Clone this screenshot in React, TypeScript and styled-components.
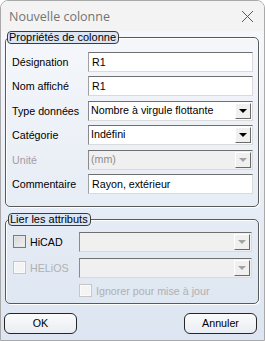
import styled, { createGlobalStyle } from "styled-components";

const GlobalStyle = createGlobalStyle`
  html, body {
    margin: 0;
    padding: 0;
    background: #ffffff;
  }
  * {
    box-sizing: border-box;
  }
`;

export default function App() {
  return (
    <>
      <GlobalStyle />
      <Window>
        <TitleBar>
          <Title>Nouvelle colonne</Title>
          <CloseIcon width="13" height="13" viewBox="0 0 13 13">
            <path d="M1 1 L12 12 M12 1 L1 12" stroke="#5a5a5a" strokeWidth="1" fill="none" />
          </CloseIcon>
        </TitleBar>

        <Body>
          <Group>
            <Legend>Propriétés de colonne</Legend>
            <FormGrid>
              <Label>Désignation</Label>
              <TextBox>R1</TextBox>

              <Label>Nom affiché</Label>
              <TextBox>R1</TextBox>

              <Label>Type données</Label>
              <Combo>
                <ComboText>Nombre à virgule flottante</ComboText>
                <ComboButton><Arrow /></ComboButton>
              </Combo>

              <Label>Catégorie</Label>
              <Combo>
                <ComboText>Indéfini</ComboText>
                <ComboButton><Arrow /></ComboButton>
              </Combo>

              <Label $disabled>Unité</Label>
              <Combo $disabled>
                <ComboText $disabled>(mm)</ComboText>
                <ComboButton><Arrow $disabled /></ComboButton>
              </Combo>

              <Label>Commentaire</Label>
              <TextBox>Rayon, extérieur</TextBox>
            </FormGrid>
          </Group>

          <Group $second>
            <Legend>Lier les attributs</Legend>
            <LinkGrid>
              <CheckLabel>
                <CheckBox />
                HiCAD
              </CheckLabel>
              <Combo $disabled>
                <ComboText $disabled />
                <ComboButton><Arrow $disabled /></ComboButton>
              </Combo>

              <CheckLabel $disabled>
                <CheckBox $disabled />
                HELiOS
              </CheckLabel>
              <Combo $disabled>
                <ComboText $disabled />
                <ComboButton><Arrow $disabled /></ComboButton>
              </Combo>

              <span />
              <CheckLabel $disabled>
                <CheckBox $disabled />
                Ignorer pour mise à jour
              </CheckLabel>
            </LinkGrid>
          </Group>

          <ButtonRow>
            <Button>OK</Button>
            <Button>Annuler</Button>
          </ButtonRow>
        </Body>
      </Window>
    </>
  );
}

const Window = styled.div`
  width: 265px;
  height: 341px;
  border: 1px solid #a9a9a9;
  border-radius: 8px 8px 0 0;
  overflow: hidden;
  display: flex;
  flex-direction: column;
  font-family: "Liberation Sans", Arial, sans-serif;
  font-size: 10.7px;
  color: #000;
`;

const TitleBar = styled.div`
  height: 30px;
  flex: 0 0 30px;
  background: #f3f3f3;
  display: flex;
  align-items: center;
  justify-content: space-between;
  padding: 0 10px 0 8px;
`;

const Title = styled.span`
  font-family: "Open Sans", "Liberation Sans", sans-serif;
  font-size: 12.5px;
  color: #737373;
`;

const CloseIcon = styled.svg`
  display: block;
`;

const Body = styled.div`
  flex: 1;
  background: linear-gradient(#f5f7fb, #dce5f1);
  padding: 0 5px 0 3px;
  display: flex;
  flex-direction: column;
`;

const Group = styled.fieldset<{ $second?: boolean }>`
  margin: ${(p) => (p.$second ? "6px 0 0 1px" : "0 0 0 1px")};
  padding: ${(p) => (p.$second ? "6px 6px 5px 7px" : "8px 5px 12px 6px")};
  border: 1px solid #5a5a5a;
  border-radius: 5px;
  box-shadow: inset 1px 1px 0 #ffffff, 1px 1px 0 #ffffff;
  min-width: 0;
`;

const Legend = styled.legend`
  margin-left: -5px;
  padding: 0 2px 0 1px;
  height: 13px;
  line-height: 11px;
  font-size: 11px;
  border: 1px solid #3c3c3c;
  border-radius: 4px;
  background: #dbe5f4;
  color: #000;
`;

const FormGrid = styled.div`
  display: grid;
  grid-template-columns: 76px 1fr;
  grid-auto-rows: 20px;
  row-gap: 4.4px;
  align-items: center;
`;

const Label = styled.span<{ $disabled?: boolean }>`
  color: ${(p) => (p.$disabled ? "#a39ca6" : "#000")};
  white-space: nowrap;
`;

const TextBox = styled.div`
  height: 20px;
  background: #ffffff;
  border-top: 1px solid #6f6f6f;
  border-left: 1px solid #a0a0a0;
  border-right: 1px solid #dadada;
  border-bottom: 1px solid #dadada;
  padding: 0 0 0 3px;
  line-height: 18px;
  white-space: nowrap;
  overflow: hidden;
`;

const Combo = styled.div<{ $disabled?: boolean }>`
  height: 20px;
  display: flex;
  align-items: stretch;
  background: ${(p) => (p.$disabled ? "#f0f0f0" : "#ffffff")};
  border-top: 1px solid #6f6f6f;
  border-left: 1px solid #8a8a8a;
  border-right: 1px solid #dadada;
  border-bottom: 1px solid #dadada;
`;

const ComboText = styled.span<{ $disabled?: boolean }>`
  flex: 1;
  padding-left: 2px;
  line-height: 17px;
  color: ${(p) => (p.$disabled ? "#8d8d8d" : "#000")};
  white-space: nowrap;
  overflow: hidden;
`;

const ComboButton = styled.span`
  width: 16px;
  margin: 1px;
  display: flex;
  align-items: center;
  justify-content: center;
  background: #f0f0f0;
  border-top: 1px solid #ffffff;
  border-left: 1px solid #ffffff;
  border-right: 1px solid #6a6a6a;
  border-bottom: 1px solid #6a6a6a;
`;

const Arrow = styled.span<{ $disabled?: boolean }>`
  width: 0;
  height: 0;
  border-left: 4px solid transparent;
  border-right: 4px solid transparent;
  border-top: 4px solid ${(p) => (p.$disabled ? "#a3a3a3" : "#000")};
`;

const LinkGrid = styled.div`
  display: grid;
  grid-template-columns: 66px 1fr;
  grid-template-rows: 20px 20px 14px;
  row-gap: 6px;
  align-items: center;
`;

const CheckLabel = styled.label<{ $disabled?: boolean }>`
  display: flex;
  align-items: center;
  gap: 4px;
  color: ${(p) => (p.$disabled ? "#b0b0b0" : "#000")};
  white-space: nowrap;
`;

const CheckBox = styled.span<{ $disabled?: boolean }>`
  width: 13px;
  height: 13px;
  flex: 0 0 13px;
  border: 1px solid ${(p) => (p.$disabled ? "#c6c6c6" : "#7a7a7a")};
  background: ${(p) =>
    p.$disabled ? "#f4f4f4" : "linear-gradient(135deg, #d6d6d6, #f2f2f2)"};
  box-shadow: inset 0 0 0 1px ${(p) => (p.$disabled ? "#fafafa" : "#e6e6e6")};
`;

const ButtonRow = styled.div`
  display: flex;
  justify-content: space-between;
  margin-top: 9px;
  padding: 0 2px 0 0;
`;

const Button = styled.button`
  width: 73px;
  height: 21px;
  border: 1px solid #262626;
  border-radius: 6px;
  background: linear-gradient(#fbfbfb, #e9edf3);
  font-family: "Liberation Sans", Arial, sans-serif;
  font-size: 10.7px;
  color: #000;
  padding: 0;
`;
